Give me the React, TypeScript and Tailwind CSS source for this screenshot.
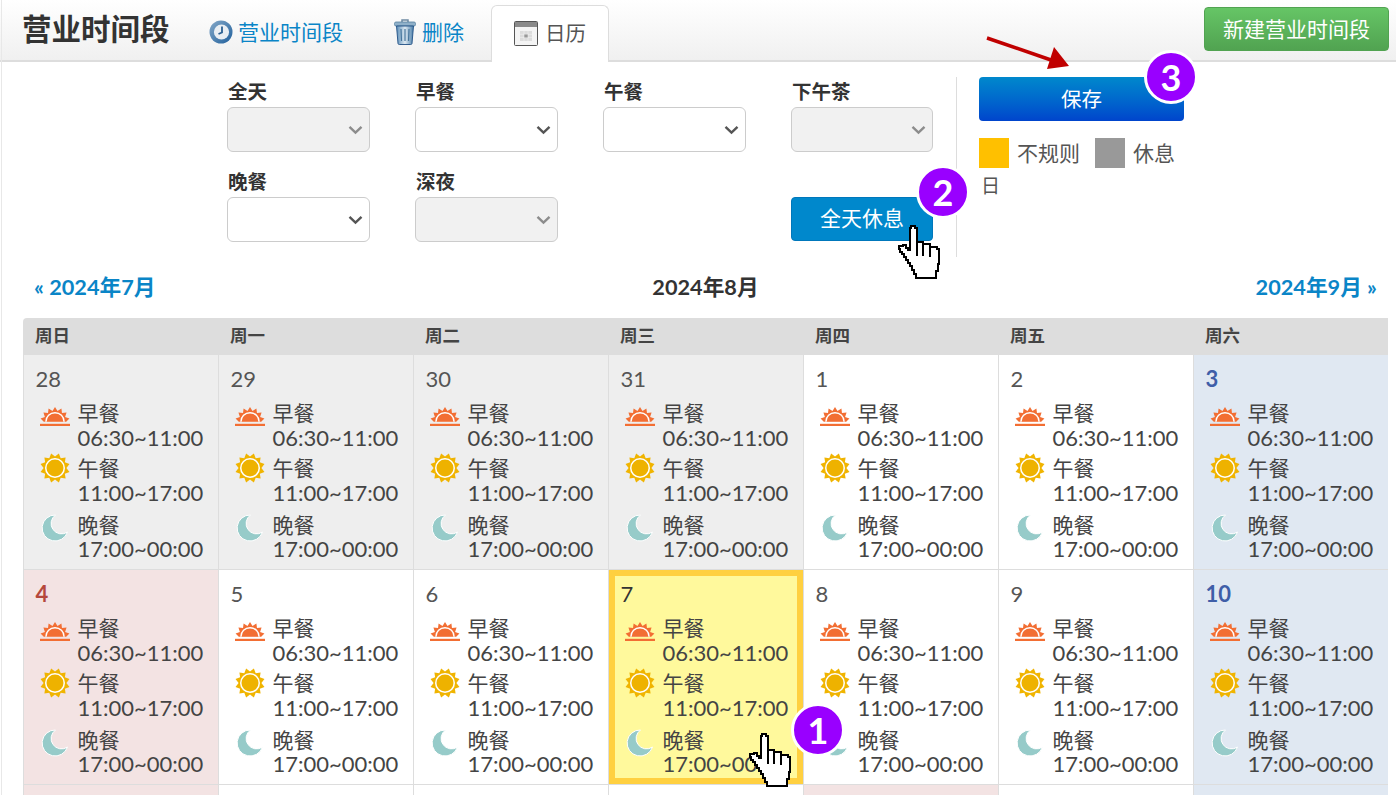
import React from "react";

const starPoints = (cx: number, cy: number, outer: number, inner: number, n: number, from = 0, to = 360) => {
  const pts: string[] = [];
  const step = (to - from) / (n * 2);
  for (let i = 0; i <= n * 2; i++) {
    const r = i % 2 === 1 ? outer : inner;
    const a = ((from + i * step) * Math.PI) / 180;
    pts.push(`${(cx + r * Math.cos(a)).toFixed(2)},${(cy + r * Math.sin(a)).toFixed(2)}`);
  }
  return pts.join(" ");
};

const Sunrise = () => (
  <svg width="30" height="20" viewBox="0 0 30 20" className="block">
    <polygon points={starPoints(15, 14.8, 14.8, 11.2, 7, 180, 360)} fill="#f26e33" />
    <path d="M5.2 14.8a9.8 9.8 0 0 1 19.6 0z" fill="#fff" />
    <path d="M6.6 14.8a8.4 8.4 0 0 1 16.8 0z" fill="#f26e33" />
    <rect x="0" y="16.8" width="30" height="2.2" fill="#f26e33" />
  </svg>
);

const Sun = () => (
  <svg width="30" height="30" viewBox="0 0 30 30" className="block">
    <polygon points={starPoints(15, 15, 15, 11.4, 12)} fill="#f0b400" />
    <circle cx="15" cy="15" r="10" fill="#fff" />
    <circle cx="15" cy="15" r="8.5" fill="#eeb200" />
  </svg>
);

const Moon = () => (
  <svg width="28" height="28" viewBox="0 0 28 28" className="block">
    <path d="M15.5 1A13 13 0 1 0 27.5 18A9.6 9.6 0 0 1 15.5 1z" fill="#96cbc9" stroke="#fff" strokeWidth="1" />
  </svg>
);

const Chevron = ({ off }: { off: boolean }) => (
  <svg width="15" height="10" viewBox="0 0 15 10" className="mr-[6px]">
    <path d="M1.5 1.8 7.5 7.6 13.5 1.8" fill="none" stroke={off ? "#8c8c8c" : "#555"} strokeWidth="2.4" />
  </svg>
);

const Clock = () => (
  <svg width="24" height="24" viewBox="0 0 24 24" className="block">
    <defs>
      <linearGradient id="clk" x1="0" y1="0" x2="1" y2="1">
        <stop offset="0" stopColor="#86a9c8" />
        <stop offset="1" stopColor="#1f5f9c" />
      </linearGradient>
    </defs>
    <circle cx="12" cy="12" r="11.5" fill="url(#clk)" />
    <circle cx="12.5" cy="12" r="7.6" fill="#e9eef3" />
    <path d="M13 6.5 13 12.5 9.5 14" fill="none" stroke="#2b5f92" strokeWidth="1.8" />
  </svg>
);

const Trash = () => (
  <svg width="22" height="26" viewBox="0 0 22 26" className="block">
    <defs>
      <linearGradient id="trs" x1="0" y1="0" x2="1" y2="0">
        <stop offset="0" stopColor="#5d8fb8" />
        <stop offset="0.5" stopColor="#dce8f1" />
        <stop offset="1" stopColor="#4a7ea9" />
      </linearGradient>
    </defs>
    <path d="M8 3V1h6v2" fill="none" stroke="#6f8ba3" strokeWidth="1.5" />
    <rect x="0.5" y="3" width="21" height="4" rx="1.5" fill="#8fb0c9" stroke="#55809f" strokeWidth="0.8" />
    <path d="M2.5 7h17l-1.5 17.5q-.2 1-1.4 1H5.4q-1.2 0-1.4-1z" fill="url(#trs)" stroke="#1f4f85" strokeWidth="0.9" />
    <path d="M7 10l.5 12M11 10v12M15 10l-.5 12" stroke="#47769c" strokeWidth="1.2" />
  </svg>
);

const CalendarIcon = () => (
  <svg width="24" height="25" viewBox="0 0 24 25" className="block">
    <rect x="0.5" y="0.5" width="23" height="24" rx="1" fill="#f4f4f4" stroke="#555" />
    <rect x="1" y="1" width="22" height="5" fill="#8a8a8a" />
    <rect x="6" y="10" width="12" height="10" fill="#dcdcdc" />
    <rect x="10" y="13" width="4" height="4" fill="#999" />
    <path d="M6 13.3h12M6 16.6h12M10 10v10M14 10v10" stroke="#f4f4f4" strokeWidth="0.5" />
  </svg>
);

const Hand = ({ className }: { className: string }) => (
  <svg width="42" height="55" viewBox="0 0 42 55" className={className} shapeRendering="crispEdges">
    <path
      d="M13 1h4v2h2v14h6v2h7v3h7v2h2v15h-1v7h-2v7H18v-4h-2v-4h-2v-4h-2v-3h-2v-3H8v-3H6v-3H4v-2H2v-3H1v-3h4v-1h3v3h2v2h2V3h1z"
      fill="#fff"
      stroke="#000"
      strokeWidth="2.4"
    />
    <path d="M19 17v14M25 19v12M32 22v10" fill="none" stroke="#000" strokeWidth="2" />
  </svg>
);

const Badge = ({ n, className }: { n: number; className: string }) => (
  <div
    className={`absolute flex h-[54px] w-[54px] items-center justify-center rounded-full border-[3px] border-white bg-[#9900ff] text-[36px] font-bold leading-none text-white [font-family:Lato,sans-serif] ${className}`}
  >
    {n}
  </div>
);

const Field = ({ label, off }: { label: string; off?: boolean }) => (
  <div className="flex flex-col">
    <div className="h-[30px] pl-px text-[19.5px] font-bold leading-[29px] text-[#333]">{label}</div>
    <div
      className={`flex h-[45px] items-center justify-end rounded-[6px] border border-[#ccc] ${off ? "bg-[#f1f1f1]" : "bg-white"}`}
    >
      <Chevron off={!!off} />
    </div>
  </div>
);

type Kind = "plain" | "prev" | "sun" | "sat" | "pick";
const kindBg: Record<Kind, string> = {
  plain: "bg-white",
  prev: "bg-[#eeeeee]",
  sun: "bg-[#f3e3e3]",
  sat: "bg-[#e0e8f2]",
  pick: "bg-[#fff99c]",
};

const Meal = ({ icon, iconClass, name, time, className }: { icon: React.ReactNode; iconClass: string; name: string; time: string; className?: string }) => (
  <div className={`flex ${className ?? ""}`}>
    <div className={`w-[38px] shrink-0 ${iconClass}`}>{icon}</div>
    <div className="text-[#444]">
      <div className="h-[24.5px] text-[21px] leading-[24.5px]">{name}</div>
      <div className="h-[24.5px] text-[22px] leading-[24.5px]">{time}</div>
    </div>
  </div>
);

const Cell = ({ d, kind }: { d: number; kind: Kind }) => {
  const pick = kind === "pick";
  const dateColor = kind === "sat" ? "font-bold text-[#3f5ea8]" : kind === "sun" ? "font-bold text-[#b5483c]" : "text-[#555]";
  return (
    <div className={`relative h-[215px] overflow-hidden border-b border-l border-[#dddddd] pt-[12px] pl-[11.5px] ${kindBg[kind]}`}>
      {pick && <div className="absolute inset-0 border-[6px] border-[#ffd040]" />}
      <div className={`relative h-[24px] text-[22px] leading-[24px] ${pick ? "text-[#333]" : dateColor}`}>{d}</div>
      <div className="relative mt-[10px] pl-[4px]">
        <Meal icon={<Sunrise />} iconClass="pt-[6px]" name="早餐" time="06:30~11:00" />
        <Meal icon={<Sun />} iconClass="-mt-[3px]" name="午餐" time="11:00~17:00" className="mt-[6px]" />
        <Meal icon={<Moon />} iconClass="mt-[1px]" name="晚餐" time="17:00~00:00" className="mt-[7.5px]" />
      </div>
    </div>
  );
};

const days: [number, Kind][] = [
  [28, "prev"], [29, "prev"], [30, "prev"], [31, "prev"], [1, "plain"], [2, "plain"], [3, "sat"],
  [4, "sun"], [5, "plain"], [6, "plain"], [7, "pick"], [8, "plain"], [9, "plain"], [10, "sat"],
];
const lastRow: Kind[] = ["sun", "plain", "plain", "plain", "sun", "plain", "sat"];

const week = ["周日", "周一", "周二", "周三", "周四", "周五", "周六"];

export default function App() {
  return (
    <div className="relative h-[795px] w-[1396px] overflow-hidden bg-white [font-family:Lato,'Noto_Sans_CJK_SC',sans-serif]">
      <header className="flex h-[62px] items-stretch border-b-2 border-[#dddddd] bg-gradient-to-b from-white to-[#f0f0f0] pl-[22px]">
        <h1 className="mr-[15.5px] self-center pb-[2px] text-[29.5px] font-bold leading-[36px] text-[#333]">营业时间段</h1>
        <nav className="flex gap-[3px] pt-[5px]">
          <a className="flex items-center gap-[5px] px-[24px] pb-[2px] text-[21px] text-[#0a85c7]">
            <Clock />营业时间段
          </a>
          <a className="flex items-center gap-[6px] px-[24px] pb-[2px] text-[21px] text-[#0a85c7]">
            <Trash />删除
          </a>
          <a className="-mb-[2px] flex items-center gap-[7px] rounded-t-[6px] border border-b-0 border-[#dddddd] bg-white px-[22px] pb-[2px] text-[20.5px] text-[#555]">
            <CalendarIcon />日历
          </a>
        </nav>
        <button className="mt-[7px] mr-[7px] ml-auto h-[44px] w-[185px] self-start rounded-[4px] border border-[#51a351] bg-gradient-to-b from-[#66c566] to-[#51a351] text-[21px] text-white">
          新建营业时间段
        </button>
      </header>

      <section className="flex h-[195px] pt-[15px] pl-[227px]">
        <div className="grid grid-cols-[143px_143px_143px_142px] content-start gap-x-[45px] gap-y-[15px]">
          <Field label="全天" off />
          <Field label="早餐" />
          <Field label="午餐" />
          <Field label="下午茶" off />
          <Field label="晚餐" />
          <Field label="深夜" off />
          <div />
          <button className="mb-[1px] h-[44px] self-end rounded-[4px] border border-[#0077bb] bg-[#0088cc] pb-[2px] text-[21px] text-white">
            全天休息
          </button>
        </div>
        <div className="ml-[23px] h-[180px] border-l border-[#dddddd] pl-[22px]">
          <button className="h-[44px] w-[205px] rounded-[4px] bg-gradient-to-b from-[#0088cc] to-[#0044cc] text-[20.5px] text-white">
            保存
          </button>
          <div className="mt-[17px] flex items-center text-[21px] leading-[30px] text-[#555]">
            <span className="h-[30px] w-[30px] bg-[#ffc000]" />
            <span className="ml-[8px]">不规则</span>
            <span className="ml-[15px] h-[30px] w-[30px] bg-[#999999]" />
            <span className="ml-[8px]">休息</span>
          </div>
          <div className="mt-[3px] pl-[2px] text-[19px] leading-[30px] text-[#555]">日</div>
        </div>
      </section>

      <div className="mt-[15px] flex h-[30px] items-center justify-between pr-[19px] pl-[34px] text-[21.7px] font-bold leading-[30px]">
        <a className="text-[#0a85c7]">« 2024年7月</a>
        <span className="text-[#333]">2024年8月</span>
        <a className="text-[#0a85c7]">2024年9月 »</a>
      </div>

      <main className="mt-[16px] ml-[23px] grid w-[1366px] grid-cols-[repeat(7,195px)]">
        {week.map((w, i) => (
          <div key={w} className={`h-[37px] bg-[#dddddd] pl-[12px] text-[17.5px] font-bold leading-[36px] text-[#444] ${i === 0 ? "rounded-tl-[4px]" : ""}`}>
            {w}
          </div>
        ))}
        {days.map(([d, k], i) => (
          <Cell key={i} d={d} kind={k} />
        ))}
        {lastRow.map((k, i) => (
          <div key={i} className={`h-[10px] border-l border-[#dddddd] ${kindBg[k]}`} />
        ))}
      </main>

      <div className="absolute top-0 left-px h-full w-px bg-[#e8e8e8]" />

      <svg className="absolute top-[36px] left-[985px]" width="86" height="34" viewBox="0 0 86 34">
        <path d="M2 2 66 24" stroke="#c00000" strokeWidth="3.6" fill="none" />
        <polygon points="84,30 62,33 69,11" fill="#c00000" />
      </svg>

      <Badge n={3} className="top-[50px] left-[1144px]" />
      <Badge n={2} className="top-[165px] left-[916px]" />
      <Badge n={1} className="top-[703px] left-[791px]" />
      <Hand className="absolute top-[225px] left-[898px]" />
      <Hand className="absolute top-[733px] left-[749px]" />
    </div>
  );
}
